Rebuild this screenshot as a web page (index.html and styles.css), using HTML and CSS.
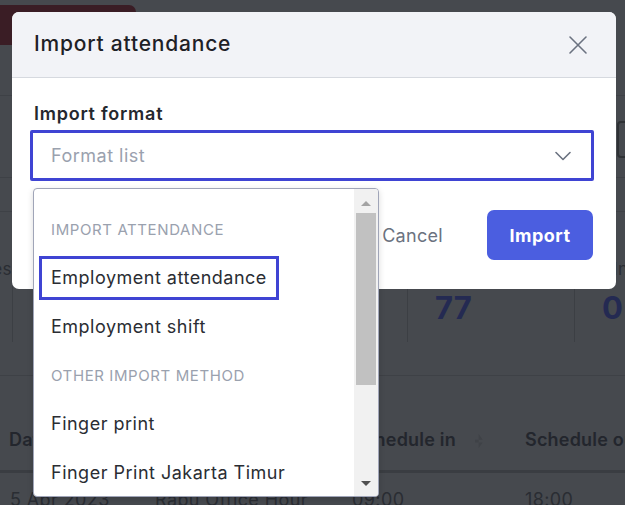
FILE: index.html
```html
<!DOCTYPE html>
<html lang="en">
<head>
<meta charset="utf-8">
<title>Import attendance</title>
<link rel="stylesheet" href="styles.css">
</head>
<body>
<div class="page">
  <div class="topbar"><div class="btn-red"></div></div>
  <div class="filters"><div class="filter-input"></div></div>
  <div class="filters2"></div>
  <div class="stats">
    <div class="stat stat-first"><div class="stat-label clip-left">Employees</div></div>
    <div class="stat stat-wide"><div class="stat-label">Present</div><div class="stat-num">120</div></div>
    <div class="stat"><div class="stat-label">Late</div><div class="stat-num">77</div></div>
    <div class="stat"><div class="stat-label stat-label-far">Incomplete</div><div class="stat-num">0</div></div>
  </div>
  <div class="thead">
    <div class="cell">Date</div>
    <div class="cell">Shift</div>
    <div class="cell">Schedule in <span class="sort"></span></div>
    <div class="cell">Schedule out</div>
  </div>
  <div class="trow">
    <div class="cell">5 Apr 2023</div>
    <div class="cell">Rabu Office Hour</div>
    <div class="cell">09:00</div>
    <div class="cell">18:00</div>
  </div>
</div>

<div class="modal">
  <div class="modal-header">
    <div class="modal-title">Import attendance</div>
    <svg class="close" width="20" height="20" viewBox="0 0 20 20"><path d="M2 2 L18 18 M18 2 L2 18" stroke="#6b7280" stroke-width="1.6" fill="none" stroke-linecap="round"/></svg>
  </div>
  <div class="modal-body">
    <div class="field-label">Import format</div>
    <div class="select">
      <span class="placeholder">Format list</span>
      <svg width="16" height="10" viewBox="0 0 16 10"><path d="M1 1.5 L8 8.5 L15 1.5" stroke="#6b7280" stroke-width="1.6" fill="none" stroke-linecap="round" stroke-linejoin="round"/></svg>
    </div>
    <div class="footer">
      <span class="cancel">Cancel</span>
      <span class="import">Import</span>
    </div>
  </div>
</div>

<div class="listbox">
  <div class="options">
    <div class="opt group">Import attendance</div>
    <div class="opt active"><span>Employment attendance</span></div>
    <div class="opt">Employment shift</div>
    <div class="opt group">Other import method</div>
    <div class="opt">Finger print</div>
    <div class="opt">Finger Print Jakarta Timur</div>
  </div>
  <div class="scroll">
    <div class="arrow-btn"><span class="tri-up"></span></div>
    <div class="thumb"></div>
    <div class="track"></div>
    <div class="arrow-btn"><span class="tri-down"></span></div>
  </div>
</div>
</body>
</html>
```

FILE: styles.css
```css
* { box-sizing: border-box; }
html, body { margin: 0; padding: 0; }
body {
  width: 625px;
  height: 505px;
  overflow: hidden;
  position: relative;
  background: #46494e;
  font-family: Inter, "Noto Sans", sans-serif;
}

/* backdrop page (dimmed) */
.page { height: 505px; display: flex; flex-direction: column; }
.topbar { height: 96px; padding-top: 5px; border-bottom: 1px solid #3e4146; flex: none; }
.btn-red { width: 136px; height: 40px; background: #3a1d25; border-radius: 0 7px 0 0; }
.filters {
  height: 82px; flex: none;
  border-bottom: 1px solid #3e4146;
  display: flex; justify-content: flex-end; align-items: flex-start;
  padding-top: 25px;
}
.filter-input { width: 40px; height: 37px; border: 2px solid #2e3135; border-radius: 4px; margin-right: -32px; }
.filters2 { height: 34px; flex: none; border-bottom: 1px solid #3e4146; }
.stats {
  height: 164px; flex: none;
  border-bottom: 1px solid #3e4146;
  display: flex; align-items: flex-start;
}
.stat {
  width: 167px; flex: none;
  height: 130px;
  border-left: 1px solid #3c3f44;
  padding: 46px 0 0 27px;
}
.stat-first { width: 12px; border-left: none; padding-left: 0; }
.stat-wide { width: 395px; }
.stat-label { font-size: 17px; letter-spacing: 0.4px; line-height: 22px; color: #2a2d33; white-space: nowrap; }
.stat-label-far { padding-left: 11px; }
.clip-left { width: 12px; overflow: hidden; direction: rtl; text-align: right; }
.stat-num { font-size: 31px; font-weight: 700; line-height: 40px; margin-top: 8px; color: #242a52; }

.thead {
  flex: none;
  display: grid;
  grid-template-columns: 146px 197px 173px 1fr;
  padding: 50px 0 16px 9px;
  border-bottom: 3px solid #3a3d42;
  font-size: 18px; font-weight: 600; color: #23262d; letter-spacing: 0.2px;
  line-height: 28px;
  white-space: nowrap;
}
.trow {
  flex: none;
  display: grid;
  grid-template-columns: 145px 197px 173px 1fr;
  padding: 15px 0 0 10px;
  font-size: 18px; color: #2a2d33; line-height: 24px; letter-spacing: 0.4px;
  white-space: nowrap;
}
.sort { display: inline-block; width: 8px; height: 14px; margin-left: 14px; vertical-align: middle;
  background: #3f4247; clip-path: polygon(50% 0, 100% 40%, 0 40%, 0 60%, 100% 60%, 50% 100%); }

/* modal */
.modal {
  position: absolute; left: 12px; top: 12px;
  width: 604px; height: 277px;
  background: #fff; border-radius: 7px; overflow: hidden;
}
.modal-header {
  height: 66px;
  background: #f2f3f7;
  border-bottom: 1px solid #d6d9df;
  display: flex; align-items: center; justify-content: space-between;
  padding: 0 28px 0 22px;
}
.modal-title { font-size: 21px; font-weight: 500; letter-spacing: 0.8px; color: #1e2126; margin-top: -2px; }
.modal-body { padding: 24px 22px 0; }
.field-label { font-size: 18px; font-weight: 600; letter-spacing: 0.75px; line-height: 24px; color: #25282e; margin-bottom: 4px; }
.select {
  margin-left: -4px;
  width: 564px; height: 51px;
  border: 3px solid #3f44d3; border-radius: 2px;
  display: flex; align-items: center; justify-content: space-between;
  padding: 0 20px 0 18px;
}
.placeholder { font-size: 18px; letter-spacing: 0.5px; color: #9aa1ae; }
.footer { display: flex; justify-content: flex-end; align-items: center; margin-top: 29px; margin-right: 1px; }
.cancel { font-size: 18px; letter-spacing: 0.3px; color: #6b7280; margin-right: 44px; }
.import {
  width: 106px; height: 50px; border-radius: 7px;
  background: #4b5ee0; color: #fff;
  font-size: 18px; font-weight: 700; letter-spacing: 0.5px;
  display: flex; align-items: center; justify-content: center;
}

/* native-looking listbox */
.listbox {
  position: absolute; left: 33px; top: 188px;
  width: 346px; height: 309px;
  background: #fff;
  border: 1px solid #a0a5b8; border-radius: 4px;
  display: flex; overflow: hidden;
  box-shadow: 0 2px 6px rgba(0,0,0,0.15);
}
.options { flex: 1; padding-top: 16px; }
.opt { height: 48.6px; display: flex; align-items: center; padding-left: 17px; font-size: 18px; letter-spacing: 0.5px; color: #2a2d33; white-space: nowrap; }
.group { font-size: 15px; letter-spacing: 0.6px; color: #9aa1ae; text-transform: uppercase; }
.active span {
  display: flex; align-items: center;
  height: 44px; margin-left: -12px; padding: 0 9px;
  border: 3px solid #3f44d3;
}
.scroll { width: 24px; flex: none; background: #f1f1f1; display: flex; flex-direction: column; }
.arrow-btn { height: 24px; display: flex; align-items: center; justify-content: center; flex: none; }
.thumb { height: 172px; margin: 0 2px; background: #c1c1c1; flex: none; }
.track { flex: 1; }
.tri-up { width: 0; height: 0; border-left: 5px solid transparent; border-right: 5px solid transparent; border-bottom: 5px solid #a3a3a3; margin-top: 4px; }
.tri-down { width: 0; height: 0; border-left: 5px solid transparent; border-right: 5px solid transparent; border-top: 5px solid #505050; margin-top: -2px; }
```
